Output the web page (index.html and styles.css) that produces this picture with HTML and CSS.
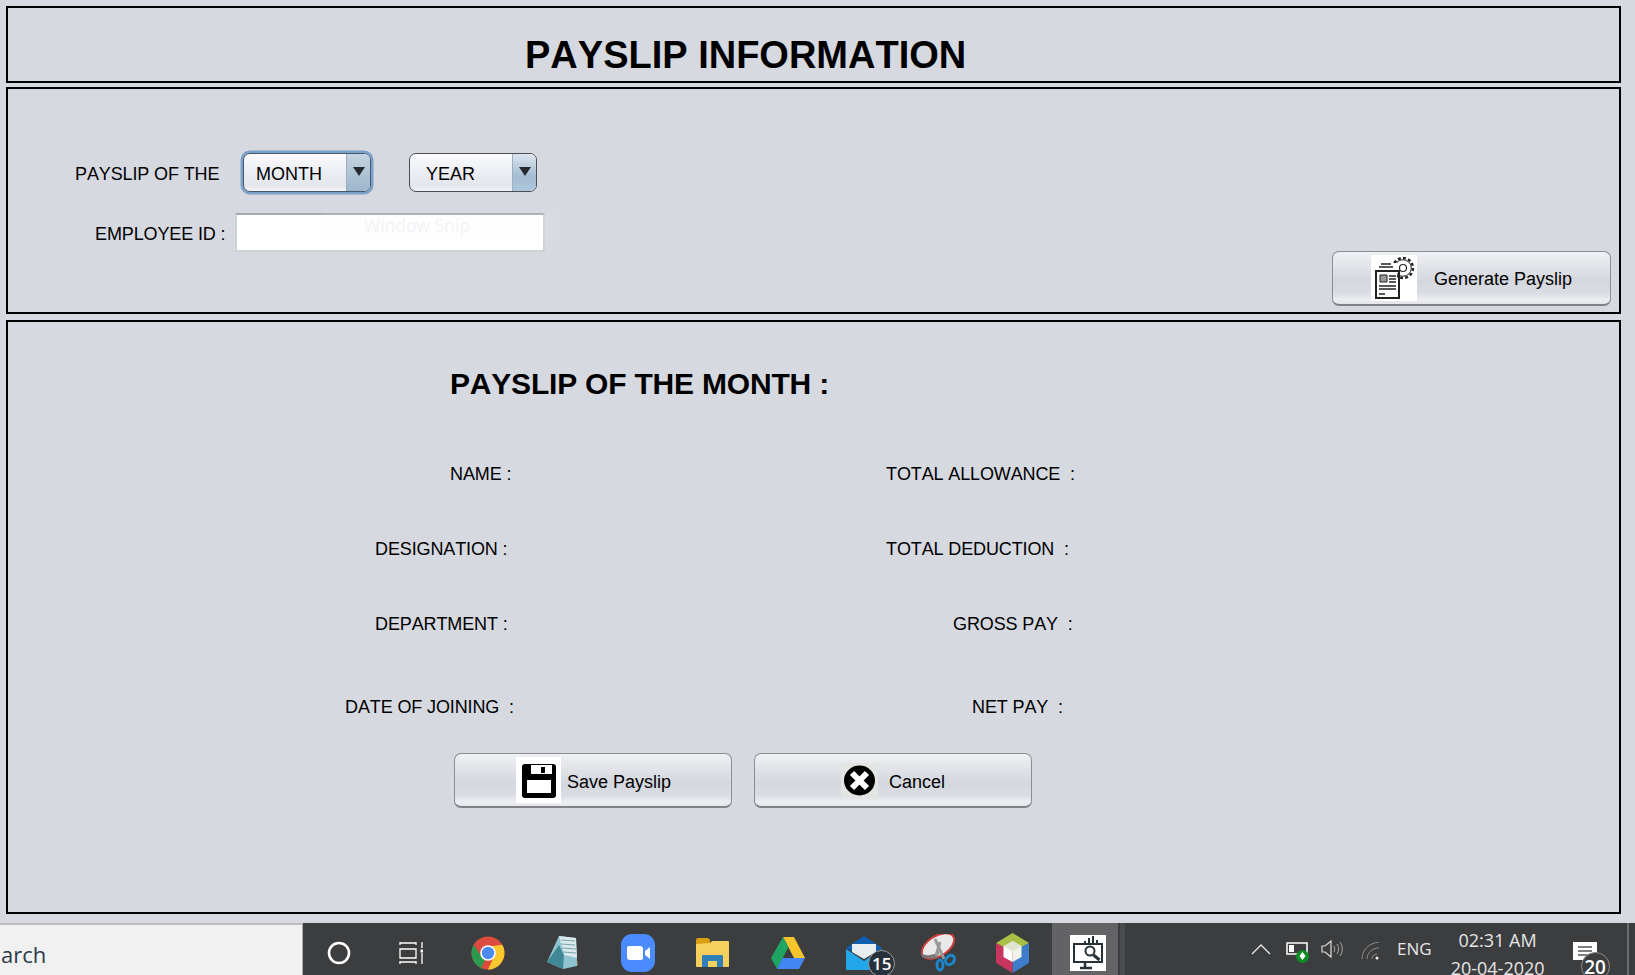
FILE: index.html
```html
<!DOCTYPE html>
<html lang="en">
<head>
<meta charset="utf-8">
<title>Payslip Information</title>
<link rel="stylesheet" href="styles.css">
</head>
<body>
<main class="app">
  <header class="panel panel-title"><h1 class="title">PAYSLIP INFORMATION</h1></header>

  <section class="panel panel-form">
    <div class="form">
      <div class="form-row form-row-period">
        <span class="label label-period">PAYSLIP OF THE</span>
        <div class="combo combo-focus"><span class="combo-text">MONTH</span><span class="combo-arrow"><i class="tri"></i></span></div>
        <div class="combo combo-year"><span class="combo-text">YEAR</span><span class="combo-arrow"><i class="tri"></i></span></div>
      </div>
      <div class="form-row form-row-id">
        <span class="label label-id">EMPLOYEE ID :</span>
        <div class="field"></div>
      </div>
    </div>
    <button class="btn btn-generate" type="button">
      <span class="btn-icon icon-gen">
        <svg width="46" height="46" viewBox="0 0 46 46"><g fill="none" stroke="#222"><circle cx="32" cy="13" r="10" stroke-width="2.400" stroke-dasharray="3 2.200"/><circle cx="32" cy="13" r="8.300" stroke-width="1"/><circle cx="32" cy="13" r="3.500" stroke-width="1.200"/></g><path fill="#fff" d="M3 8h23v36H3z"/><g fill="none" stroke="#222"><path stroke-width="2" d="M5 16h23v27H5z"/><path stroke-width="1.600" d="M8 12h14M10 9h10"/><path fill="#999" stroke-width="1" d="M9 20h7v7H9z"/><path stroke-width="1.500" d="M18 21h7M18 24h7M18 27h7M8 31h17M8 34h17M8 39h6"/></g></svg>
      </span>
      <span class="btn-text">Generate Payslip</span>
    </button>
  </section>

  <section class="panel panel-slip">
    <h2 class="heading">PAYSLIP OF THE MONTH :</h2>
    <div class="details">
      <div class="detail-row row-1"><span class="label pad-name">NAME :</span><span class="label">TOTAL ALLOWANCE  :</span></div>
      <div class="detail-row row-2"><span class="label pad-desig">DESIGNATION :</span><span class="label">TOTAL DEDUCTION  :</span></div>
      <div class="detail-row row-3"><span class="label pad-desig">DEPARTMENT :</span><span class="label pad-gross">GROSS PAY  :</span></div>
      <div class="detail-row row-4"><span class="label pad-doj">DATE OF JOINING  :</span><span class="label pad-net">NET PAY  :</span></div>
    </div>
    <div class="actions">
      <button class="btn btn-save" type="button">
        <span class="btn-icon icon-save">
          <svg width="45" height="46" viewBox="0 0 45 46"><rect x="6" y="7" width="34" height="34" rx="3" fill="#000"/><path fill="#fff" d="M15 8h21v9H15z"/><path fill="#000" d="M25 10h4v6h-4z"/><path fill="#fff" d="M11 23h24v13H11z"/></svg>
        </span>
        <span class="btn-text">Save Payslip</span>
      </button>
      <button class="btn btn-cancel" type="button">
        <span class="btn-icon icon-cancel">
          <svg width="37" height="35" viewBox="0 0 37 35"><ellipse cx="18.500" cy="17.500" rx="15.500" ry="15"/><path fill="none" stroke="#fff" stroke-width="6" d="M11 10l15 15M26 10L11 25"/></svg>
        </span>
        <span class="btn-text">Cancel</span>
      </button>
    </div>
  </section>
</main>

<div class="ghost"><span class="ghost-text">Window Snip</span></div>

<footer class="taskbar">
  <div class="search"><span class="search-text">arch</span></div>
  <div class="tasks">
    <span class="slot slot-cortana"><svg width="26" height="26" viewBox="0 0 26 26"><circle cx="13" cy="13" r="10" fill="none" stroke="#fff" stroke-width="2.600"/></svg></span>
    <span class="slot slot-view"><svg width="24" height="24" viewBox="0 0 24 24" fill="none" stroke="#fff" stroke-width="1.300"><path d="M1 4V1M17 4V1M1 2h16M1 8h16v9H1zM1 23v-3M17 23v-3M1 21h16M23 1v6M23 12v11"/><path fill="#fff" stroke="none" d="M21.500 8.500h3v3h-3z"/></svg></span>
    <span class="slot"><svg width="34" height="34" viewBox="0 0 34 34"><circle cx="17" cy="17" r="16.500" fill="#db4b3e"/><path fill="#2b9a4f" d="M17 33.500A16.500 16.500 0 0 1 2.700 8.800L10 20l4 4-4.500 9z"/><path fill="#f9c82d" d="M17 33.500A16.500 16.500 0 0 0 31.300 8.800L17 10.500l7 8z"/><circle cx="17" cy="17" r="7.800" fill="#fff"/><circle cx="17" cy="17" r="6.200" fill="#4b8bf0"/></svg></span>
    <span class="slot"><svg width="34" height="36" viewBox="0 0 34 36"><path fill="#b28d3c" d="M27 3l5 27-3 1z"/><path fill="#8fc3cf" d="M13 1l17 2 1 28-14 3-16-7z"/><path fill="#3f8895" d="M1 27l16 7 1-14-5-10z"/><path fill="#d9e8ea" d="M13 1l17 2 1 20-13-3z"/><path fill="none" stroke="#7aa5ad" d="M15 5l14 1M15 9l14 1M16 13l14 1M17 17l13 1"/></svg></span>
    <span class="slot"><svg width="34" height="38" viewBox="0 0 34 38"><rect width="34" height="38" rx="11" fill="#4a8cff"/><path fill="#fff" d="M6 14a2 2 0 0 1 2-2h11a3 3 0 0 1 3 3v9a2 2 0 0 1-2 2H9a3 3 0 0 1-3-3zM24 17l5-4v12l-5-4z"/></svg></span>
    <span class="slot"><svg width="33" height="31" viewBox="0 0 33 31"><path fill="#d99e0a" d="M0 3a2 2 0 0 1 2-2h10l2 2v4H0z"/><path fill="#f7cf5f" d="M0 7l14-1 2-2h16a1 1 0 0 1 1 1v24a1 1 0 0 1-1 1H1a1 1 0 0 1-1-1z"/><path fill="#2f7fb8" d="M6 30V19a1 1 0 0 1 1-1h19a1 1 0 0 1 1 1v11h-6v-6H12v6z"/><path fill="#f7cf5f" d="M12 24h9v6h-9z"/></svg></span>
    <span class="slot"><svg width="34" height="33" viewBox="0 0 34 33"><path fill="#f7c52b" d="M12 1h11l11 21H23z"/><path fill="#1fa463" d="M12 1l5.500 10L6 33 0 22z"/><path fill="#4387f5" d="M6 33l5.500-11H34l-6 11z"/></svg></span>
    <span class="slot"><span class="mail"><svg width="36" height="34" viewBox="0 0 36 34"><path fill="#0d5fb3" d="M18 0l18 12-18 10L0 12z"/><path fill="#e9edf0" d="M6 8h24v8l-12 7-12-7z"/><path fill="#22a7ea" d="M0 13l18 12 18-12v21H1a1 1 0 0 1-1-1z"/></svg><span class="badge badge-mail">15</span></span></span>
    <span class="slot"><svg width="36" height="38" viewBox="0 0 36 38"><ellipse cx="18" cy="12" rx="18" ry="10" transform="rotate(-32 18 12)" fill="#e9e9e9" stroke="#d43b3b" stroke-width="2"/><path fill="#777" d="M1 19c6 4 13 2 19-2l-3 7c-5 1-11 1-15-1z"/><path stroke="#999" stroke-width="3" d="M15 5l9 20"/><path stroke="#999" stroke-width="3" d="M20 8l-4 14"/><g fill="none" stroke="#1b86c9" stroke-width="3"><ellipse cx="20" cy="31" rx="3" ry="5"/><ellipse cx="30" cy="26" rx="4" ry="5" transform="rotate(40 30 26)"/></g></svg></span>
    <span class="slot"><svg width="33" height="40" viewBox="0 0 33 40"><path fill="#a9bf45" d="M16.500 0L33 10l-16.500 9L0 10z"/><path fill="#3d7cc9" d="M33 10v20L16.500 40V19z"/><path fill="#c6365f" d="M0 10v20l16.500 10V19z"/><path fill="#f1f2e8" d="M16.500 8l9 5v11l-9 5z"/><path fill="#dfe3cf" d="M16.500 8l-9 5 9 5 9-5z"/><path fill="#fff" d="M7.500 13l9 5v11l-9-5z"/></svg></span>
    <span class="slot slot-active"><span class="active-icon"><svg width="36" height="36" viewBox="0 0 36 36" fill="none" stroke="#263238"><path stroke-width="2" d="M15 8V6M19 8V3M23 8V1M27 8V5"/><path stroke-width="2" d="M4 9h28v18H4z"/><circle cx="20" cy="16" r="4.500" stroke-width="2"/><path stroke-width="3" d="M23.500 20l6 5"/><path stroke-width="2.500" d="M15 27v5M10 33h12"/></svg></span></span>
  </div>
  <div class="tray">
    <svg class="tray-chev" width="20" height="12" viewBox="0 0 20 12" fill="none" stroke="#e8e8e8" stroke-width="1.300"><path d="M1 11l9-9 9 9"/></svg>
    <span class="battery"><svg width="24" height="22" viewBox="0 0 24 22"><path fill="none" stroke="#fff" stroke-width="1.500" d="M1 2h20v11H1z"/><path fill="#fff" d="M3 4h5v7H3z"/><circle cx="16.500" cy="15.500" r="6.500" fill="#0f8a25"/><path fill="#fff" d="M16.500 11l3 4-3 4-3-4z"/></svg></span>
    <svg class="tray-sound" width="24" height="18" viewBox="0 0 24 18" fill="none" stroke="#dcdcdc"><path d="M1 6h3l6-5v16l-6-5H1z" stroke-width="1.200"/><path stroke="#aaa" d="M13 6c1 2 1 4 0 6M16 4c2 3 2 7 0 10M19 2c3 4 3 10 0 14"/></svg>
    <svg class="tray-wifi" width="20" height="18" viewBox="0 0 20 18" fill="none" stroke="#8e8e8e"><path d="M1 17C1 8 8 1 18 0M6 17c0-6 5-11 12-11M11 17c0-3 2-5 5-5"/><circle cx="16" cy="16" r="1.500" fill="#eee" stroke="none"/></svg>
    <span class="lang">ENG</span>
    <span class="clock"><span>02:31 AM</span><span>20-04-2020</span></span>
    <span class="notify"><svg width="24" height="18" viewBox="0 0 24 18"><path fill="#fff" d="M0 0h24v18H0z"/><path stroke="#555" stroke-width="1.300" d="M5 5h14M5 9h14M5 13h10"/></svg><span class="badge badge-notify">20</span></span>
    <span class="desk-edge"></span>
  </div>
</footer>
</body>
</html>
```
FILE: styles.css
```css
* { box-sizing: border-box; }
html, body { margin: 0; height: 975px; overflow: hidden; }
body {
  position: relative;
  background: #d6d9e0;
  color: #000;
  font-family: "Liberation Sans", Arial, sans-serif;
  font-kerning: none;
}
.app { height: 923px; padding: 6px 14px 0 6px; display: flex; flex-direction: column; }
.panel { border: 2px solid #000; padding-left: 1px; }
.panel-title { height: 77px; }
.title { margin: 26px 0 0 516px; font-size: 38px; line-height: 42px; font-weight: 700; white-space: nowrap; }
.panel-form { height: 227px; margin-top: 4px; display: flex; justify-content: space-between; }
.form { padding-top: 62px; }
.form-row { display: flex; align-items: center; }
.form-row-period { height: 42px; padding-left: 66px; }
.form-row-id { height: 39px; margin-top: 20px; padding-left: 86px; }
.label { font-size: 18px; line-height: 22px; white-space: pre; letter-spacing: -.12px; }
.label-period { width: 166px; margin-top: 4px; }
.label-id { width: 140px; margin-top: 3px; }
.combo {
  width: 128px; height: 39px; margin-left: 2px;
  display: flex; justify-content: space-between;
  border: 1.500px solid #4a4e57; border-radius: 7px; overflow: hidden;
  background: linear-gradient(#fbfbfd 0%, #eceef3 45%, #e3e6ec 85%, #f4f5f8 100%);
}
.combo-focus { box-shadow: 0 0 0 2.500px #7ba1c9; border-color: #44586e; }
.combo-year { width: 128px; margin-left: 38px; }
.combo-text { font-size: 18px; line-height: 41px; padding-left: 12px; }
.combo-year .combo-text { padding-left: 16px; }
.combo-arrow {
  width: 24px; display: flex; justify-content: center; padding-top: 13px;
  background: linear-gradient(#dde5ee, #a4bdd4 60%, #aec6dc);
  border-left: 1px solid #9cb0c5;
}
.combo-focus .combo-arrow { background: linear-gradient(#c5d3e0, #9db5cb); }
.tri { width: 0; height: 0; border-style: solid; border-width: 9px 6px 0; border-color: #262a30 transparent transparent; }
.field {
  width: 310px; height: 39px;
  background: #fff;
  border: 2px solid #d0d1d3; border-top: 2px solid #a9aaad;
}
.btn {
  display: flex; align-items: center;
  height: 55px; padding: 0;
  border: 1.500px solid #8b8d92; border-bottom: 2px solid #808287; border-radius: 7px;
  background: linear-gradient(#f0f1f4 0%, #e3e5ea 25%, #d4d7de 55%, #d9dce3 78%, #eceef3 92%, #e4e6ea 100%);
  font: 18px/22px "Liberation Sans", Arial, sans-serif; color: #000;
  font-kerning: none;
}
.btn-icon { display: flex; flex: none; }
.btn-text { padding-top: 1px; }
.btn-generate { width: 279px; margin: 162px 8px 0 0; padding-left: 38px; }
.icon-gen { background: #fff; }
.btn-generate .btn-text { margin-left: 17px; }
.panel-slip { height: 594px; margin-top: 6px; }
.heading { margin: 44px 0 0 441px; font-size: 30px; line-height: 36px; font-weight: 700; white-space: nowrap; letter-spacing: -.2px; }
.details { margin-top: 61px; }
.detail-row { display: grid; grid-template-columns: 877px 1fr; }
.row-2, .row-3 { margin-top: 53px; }
.row-4 { margin-top: 61px; }
.pad-name { padding-left: 441px; }
.pad-desig { padding-left: 366px; }
.pad-doj { padding-left: 336px; }
.pad-gross { padding-left: 67px; }
.pad-net { padding-left: 86px; }
.actions { display: flex; gap: 22px; margin: 35px 0 0 445px; }
.btn-save, .btn-cancel { width: 278px; }
.btn-save { padding-left: 61px; }
.btn-cancel { padding-left: 86px; }
.btn-save .btn-text, .btn-cancel .btn-text { padding-top: 3px; }
.icon-save { background: #fff; }
.icon-cancel { background: #e2e5e2; }
.btn-save .btn-text { margin-left: 6px; }
.btn-cancel .btn-text { margin-left: 11px; }

.ghost {
  position: absolute; left: 323px; top: 210px; width: 236px; height: 31px;
  background: rgba(246, 247, 250, .1);
  padding-left: 41px;
}
.ghost-text { font: 17.500px/30px "Open Sans", sans-serif; color: #f2f3f6; }

.taskbar { height: 52px; display: flex; background: #3c3d3f; overflow: hidden; }
.search {
  width: 303px; background: #f1f1f1;
  border-top: 2px solid #bdbdbd; border-right: 1px solid #a9a9a9;
  overflow: hidden;
}
.search-text { display: block; font: 22px/32px "Open Sans", sans-serif; color: #2c3a4c; padding-top: 13px; padding-left: 1px; }
.tasks { display: flex; width: 817px; margin-left: -2px; }
.slot { width: 74.900px; flex: none; display: flex; align-items: center; justify-content: center; position: relative; padding-top: 7px; }
.slot-cortana { padding-left: 2px; }
.slot-view { padding-right: 4px; }
.slot-active { width: 66px; margin-left: 2px; padding: 7px 0 0 6px; background: #636365; }
.active-icon { background: #fff; width: 36px; height: 36px; display: flex; }
.mail { position: relative; display: flex; margin-left: 3px; }
.badge {
  position: absolute; display: block;
  border: 1px solid #9a9ea3; border-radius: 50%;
  background: #26313c; color: #fff;
  text-align: center; font-family: "Open Sans", sans-serif; font-weight: 600;
}
.badge-mail { left: 22px; top: 14px; width: 27px; height: 27px; font-size: 17px; line-height: 26px; }
.tray { flex: 1; display: flex; align-items: center; position: relative; border-left: 5px solid #4b4c4e; margin-left: 2px; }
.tray-chev { margin-left: 126px; }
.battery { display: flex; margin-left: 15px; margin-top: 5px; }
.tray-sound { margin-left: 11px; }
.tray-wifi { margin-left: 16px; margin-top: 3px; }
.lang { margin-left: 16px; font: 17px/24px "Open Sans", sans-serif; color: #e6e6e6; }
.clock {
  width: 100px; margin-left: 16px; height: 52px;
  display: flex; flex-direction: column; align-items: center; gap: 4px;
  font: 18px/24px "Open Sans", sans-serif; color: #e6e6e6; white-space: nowrap; padding-top: 5px;
}
.notify { position: relative; display: flex; margin-left: 25px; margin-top: 4px; }
.badge-notify { left: 8px; top: 10px; width: 29px; height: 29px; font-size: 19px; line-height: 28px; border-color: #8a8a8a; background: #3c3d3f; }
.desk-edge { position: absolute; right: 6px; top: 0; bottom: 0; width: 2px; background: #6b6c6e; }
```
